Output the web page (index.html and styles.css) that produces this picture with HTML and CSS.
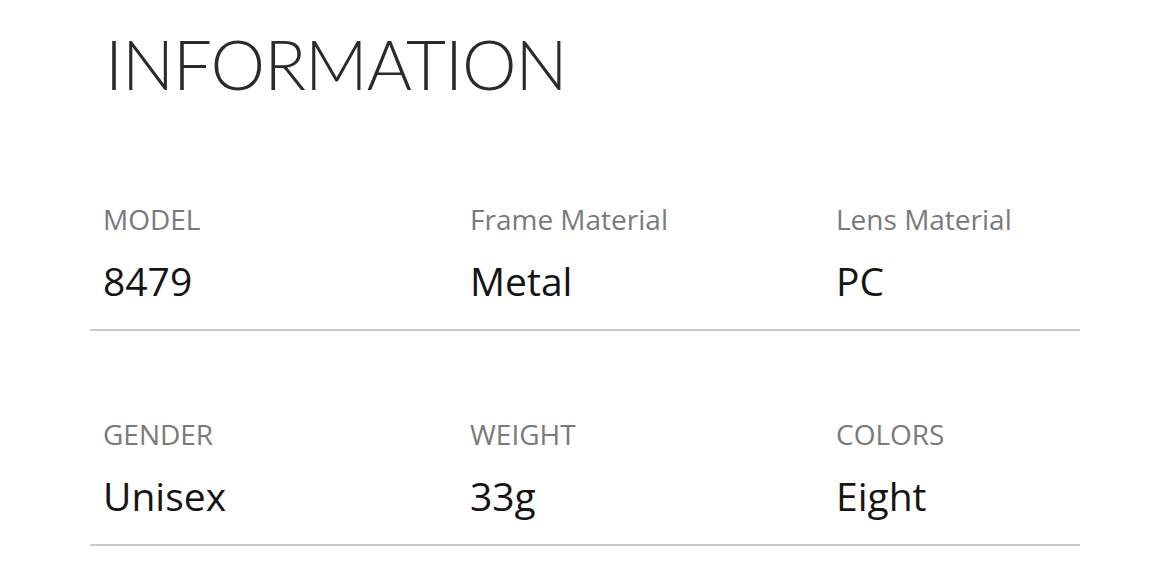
FILE: index.html
```html
<!DOCTYPE html>
<html lang="en">
<head>
<meta charset="utf-8">
<title>Information</title>
<link rel="stylesheet" href="styles.css">
</head>
<body>
<main class="page">
  <h1 class="title">INFORMATION</h1>
  <section class="specs">
    <div class="row first">
      <div class="cell"><div class="label">MODEL</div><div class="value">8479</div></div>
      <div class="cell"><div class="label">Frame Material</div><div class="value">Metal</div></div>
      <div class="cell"><div class="label">Lens Material</div><div class="value">PC</div></div>
    </div>
    <div class="row">
      <div class="cell"><div class="label">GENDER</div><div class="value">Unisex</div></div>
      <div class="cell"><div class="label">WEIGHT</div><div class="value">33g</div></div>
      <div class="cell"><div class="label">COLORS</div><div class="value">Eight</div></div>
    </div>
  </section>
</main>
</body>
</html>
```
FILE: styles.css
```css
html, body {
  margin: 0;
  padding: 0;
  background: #ffffff;
}
.page {
  width: 990px;
  padding: 29px 0 0 90px;
}
.title {
  margin: 0 0 0 15px;
  font-family: "Lato", "Open Sans", sans-serif;
  font-weight: 300;
  font-size: 69px;
  line-height: 70px;
  color: #2a2a2a;
  letter-spacing: -1px;
}
.specs {
  margin-top: 103px;
}
.row {
  display: grid;
  grid-template-columns: 367px 366px 1fr;
  padding: 0 0 25px 13px;
  border-bottom: 2px solid #c9c9c9;
}
.row + .row {
  margin-top: 86px;
}
.label {
  font-family: "Open Sans", "Noto Sans", sans-serif;
  font-size: 28px;
  line-height: 34px;
  color: #7a7a7a;
}
.value {
  margin-top: 22px;
  font-family: "Open Sans", "Noto Sans", sans-serif;
  font-size: 39px;
  line-height: 46px;
  color: #151515;
}
```
